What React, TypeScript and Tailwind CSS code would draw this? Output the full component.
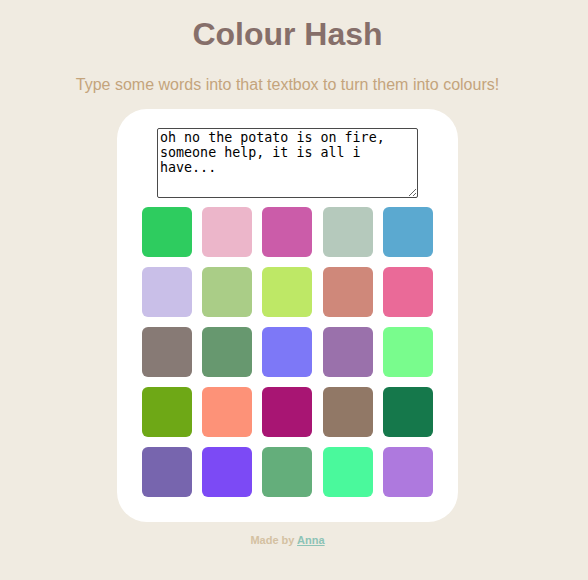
import { useState } from "react";

// Colours as they appear for the sample text, row by row
const swatches = [
  "#2ecc5f", "#ecb6ca", "#cb5ca9", "#b5c9bc", "#5ba9d0",
  "#c9bfe8", "#aacd87", "#bee866", "#cf887a", "#ea6a98",
  "#877a75", "#67986f", "#7d78f7", "#9a71ab", "#79fc8d",
  "#6ea816", "#fd9278", "#a81573", "#917866", "#15784b",
  "#7765ae", "#7c4af5", "#64ae7b", "#4af99c", "#ae79de",
];

export default function App() {
  const [texto, setTexto] = useState("oh no the potato is on fire, someone help, it is all i have...");

  return (
    <div className="min-h-[580px] bg-[#f0ebe1] pt-[16px] pr-[13px] font-['Liberation_Sans',Arial,sans-serif] text-center">
      <h1 className="text-[32px] font-bold leading-[37px] text-[#866f6a]">Colour Hash</h1>
      <p className="mt-[23px] text-[16px] leading-[18px] text-[#c4a47c]">
        Type some words into that textbox to turn them into colours!
      </p>

      <div className="mx-auto mt-[15px] w-[341px] rounded-[30px] bg-white px-[25px] pt-[19px] pb-[25px]">
        <textarea
          value={texto}
          onChange={(e) => setTexto(e.target.value)}
          className="mx-auto block h-[70px] w-[261px] resize rounded-[2px] border border-[#4a4a4a] px-[2px] py-[1px] text-left font-['DejaVu_Sans_Mono',monospace] text-[13.333px] leading-[15px] text-black outline-none"
        />
        <div className="mt-[9px] grid grid-cols-5 gap-[10px]">
          {swatches.map((c, i) => (
            <div key={i} className="h-[50px] w-[50px] rounded-[6px]" style={{ backgroundColor: c }} />
          ))}
        </div>
      </div>

      <p className="mt-[10px] text-[11px] font-bold text-[#d4c1a2]">
        Made by <a href="#" className="text-[#8cc3b6] underline">Anna</a>
      </p>
    </div>
  );
}
